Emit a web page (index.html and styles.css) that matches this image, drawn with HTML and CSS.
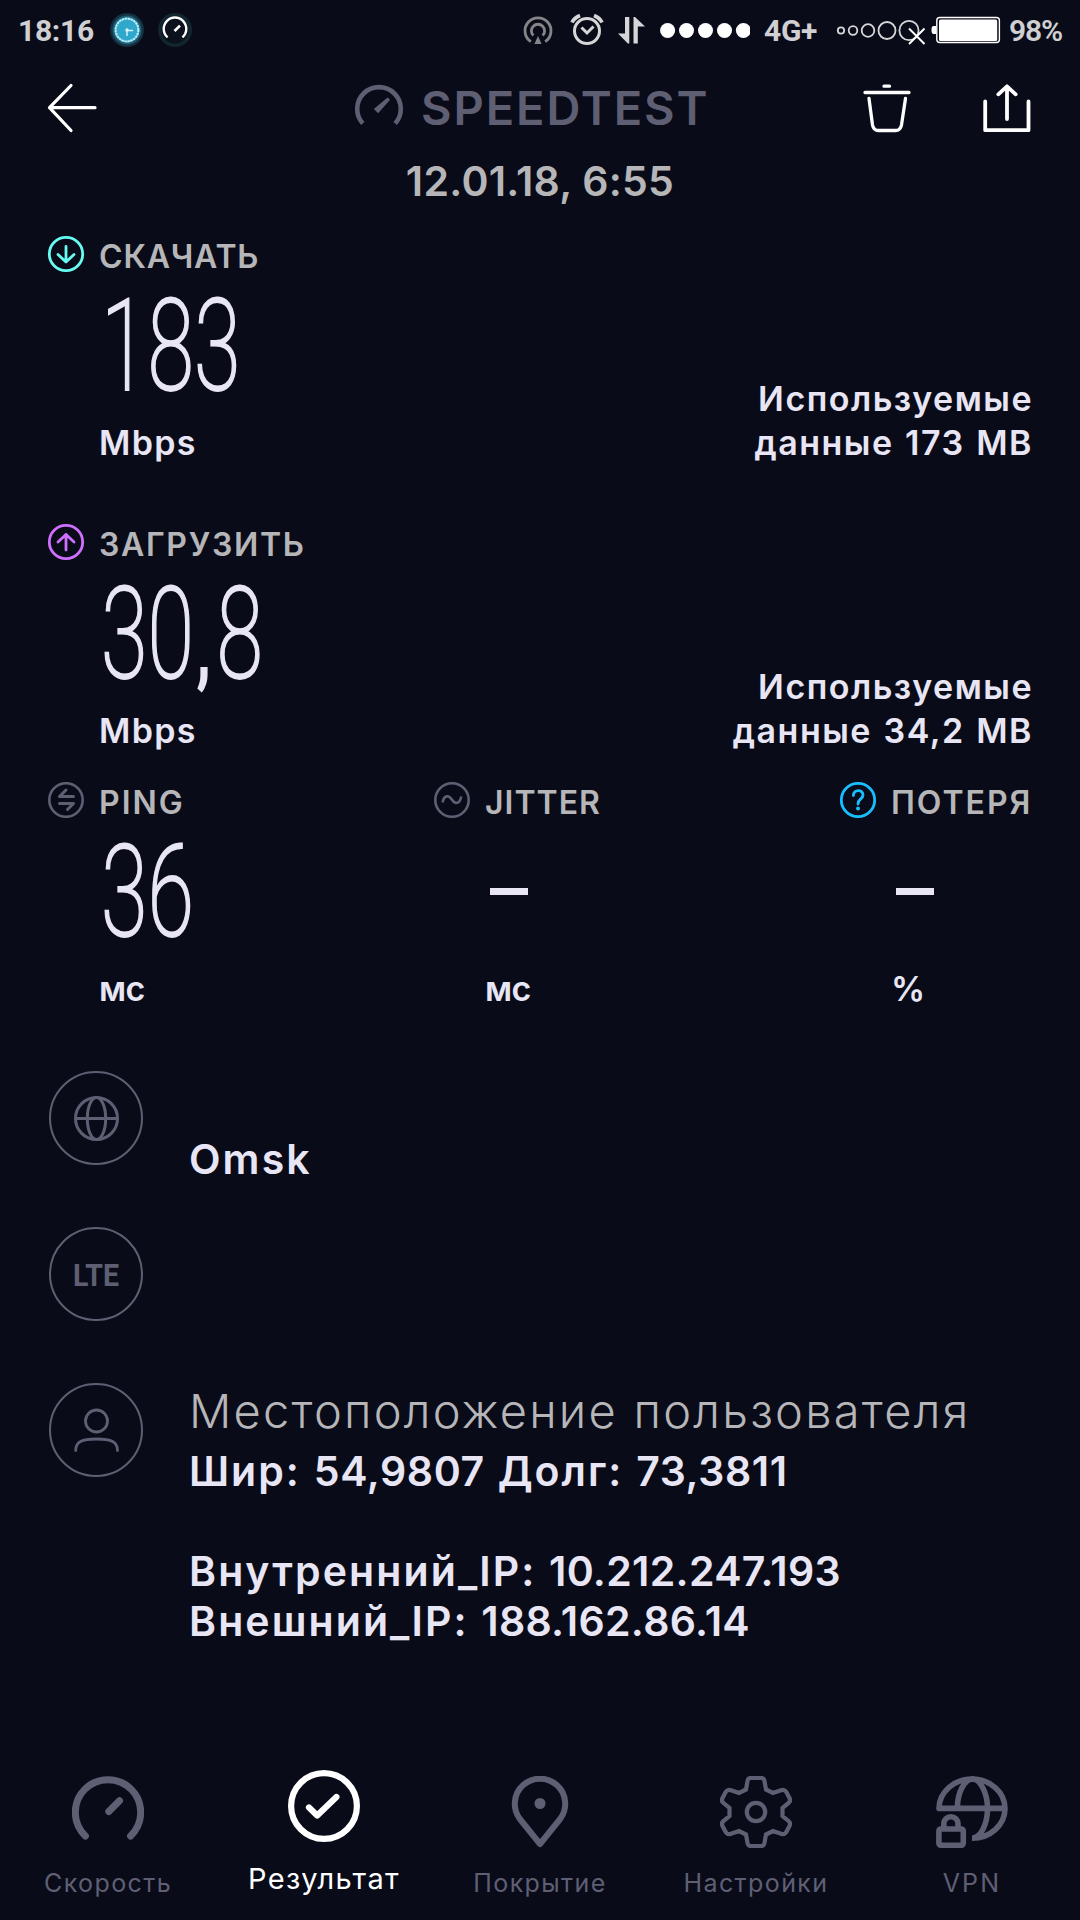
FILE: index.html
```html
<!DOCTYPE html>
<html lang="ru">
<head>
<meta charset="utf-8">
<title>Speedtest</title>
<link rel="stylesheet" href="styles.css">
</head>
<body>
<div class="status">
  <span class="clock">18:16</span>
  <svg class="notify" width="34" height="34" viewBox="0 0 34 34" fill="none"><circle cx="17" cy="17" r="17" fill="#15303f"/><circle cx="17" cy="17" r="14.5" fill="#1c6079"/><circle cx="17" cy="17" r="12.5" fill="#2fa8cc"/><circle cx="17" cy="17" r="11.4" stroke="#c9edf5" stroke-width="2" stroke-dasharray="2.4 .6"/><path d="M17 16.5V23M16 17.5H23" stroke="#d8f4fa" stroke-width="1.4"/><circle cx="17" cy="17" r="1.7" fill="#d8f4fa"/></svg>
  <svg class="notify" width="34" height="34" viewBox="0 0 34 34" fill="none"><circle cx="17" cy="17" r="17" fill="#12262f"/><circle cx="17" cy="17" r="13.5" fill="#0b111d"/><path d="M9.6 24.4A11.3 11.3 0 1 1 24.4 24.4" stroke="#fff" stroke-width="2.4"/><path d="M16.5 18 22 12.6" stroke="#fff" stroke-width="2.6"/></svg>
  <svg class="radio" width="230" height="34" viewBox="520 13 230 34" fill="none">
    <g stroke="#858588" stroke-width="2.8"><path d="M530.8 41.6A13 13 0 1 1 545.2 41.6"/><path d="M533.4 35.6A6.6 6.6 0 1 1 542.6 35.6"/></g><path d="M538 36l3.6 8h-7.2z" fill="#858588"/>
    <g stroke="#d6d6d8" stroke-width="3"><circle cx="587" cy="31" r="12.5"/><path d="M581.5 27.5l5.5 5.5 6.5-6.5"/><path d="M572 22.500Q574 18 580 15.500M602 22.500Q600 18 594 15.500" stroke-width="3.600"/></g>
    <path d="M625 17h4.300v26.500h-1.500L618 33.500h7zM637.800 43.500h-4.300V17h1.500L645 26.500h-7.200z" fill="#d6d6d8"/>
    <g fill="#fff"><circle cx="667.600" cy="30.500" r="7.500"/><circle cx="686.500" cy="30.500" r="7.500"/><circle cx="705.500" cy="30.500" r="7.500"/><circle cx="724.500" cy="30.500" r="7.500"/><circle cx="743.400" cy="30.500" r="7.500"/></g>
  </svg>
  <span class="network">4G+</span>
  <svg class="power" width="166" height="34" viewBox="835 13 166 34" fill="none">
    <g stroke="#d6d6d8" stroke-width="1.800"><circle cx="841" cy="30.500" r="3.200"/><circle cx="853" cy="30.500" r="4.300"/><circle cx="868" cy="30.500" r="6.300"/><circle cx="887" cy="30.500" r="8.500"/><circle cx="909" cy="30.500" r="9.600"/></g>
    <path d="M909 28.500 924.500 44M924.500 28.500 909 44" stroke="#fff" stroke-width="2"/>
    <path d="M936 26h-2.500q-2 0-2 4t2 4h2.500z" fill="#fff"/><rect x="936.800" y="17.500" width="62.600" height="25" rx="3" stroke="#fff" stroke-width="1.400"/><rect x="939" y="19.500" width="58.200" height="21.500" rx="1.500" fill="#fff"/>
  </svg>
  <span class="percent">98%</span>
</div>

<header class="top">
  <svg class="back" width="52" height="52" viewBox="0 0 52 52" fill="none" stroke="#fff" stroke-width="3.200" stroke-linecap="round" stroke-linejoin="round"><path d="M49 25.700H3.500M25 3.500 3.500 25.700 25 48.500"/></svg>
  <div class="brand">
    <svg width="50" height="50" viewBox="0 0 50 50" fill="none"><path d="M8.800 40.500A21.800 21.800 0 1 1 41.200 40.500" stroke="#5f5f74" stroke-width="4.600"/><path d="M33.600 14.500 36 16.800 24.200 30.300 19.800 26z" fill="#5f5f74"/></svg>
    <span class="brand-name">SPEEDTEST</span>
  </div>
  <svg class="trash" width="50" height="50" viewBox="0 0 50 50" fill="none" stroke="#fff" stroke-width="3.300" stroke-linecap="round"><path d="M22 3.200H27.500M3 9.500H47M7 15.500 10.500 42Q11.500 47.500 16.500 47.500H33.500Q38.500 47.500 39.500 42L43.500 15.500"/></svg>
  <svg class="share" width="50" height="50" viewBox="0 0 50 50" fill="none" stroke="#fff" stroke-width="3.800" stroke-linecap="round" stroke-linejoin="round"><path d="M3.200 18.500V47.200H46.500V18.500M25 36V3.500M16.300 11.300 25 3.300 33.700 11.300"/></svg>
</header>
<div class="date">12.01.18, 6:55</div>

<main>
  <section class="transfer">
    <div class="metric">
      <div class="metric-head"><svg class="badge" width="38" height="38" viewBox="0 0 38 38" fill="none" stroke="#67fcf2" stroke-width="2.800" stroke-linecap="round" stroke-linejoin="round"><circle cx="19" cy="19" r="16.700"/><path d="M19 11.500V27M11 19.500 19 27 27 19.500"/></svg><span class="label dl">СКАЧАТЬ</span></div>
      <div class="value"><span class="num">183</span></div>
      <div class="unit">Mbps</div>
    </div>
    <p class="used">Используемые<br>данные 173 MB</p>
  </section>
  <section class="transfer upload">
    <div class="metric">
      <div class="metric-head"><svg class="badge" width="38" height="38" viewBox="0 0 38 38" fill="none" stroke="#cf6ffd" stroke-width="2.800" stroke-linecap="round" stroke-linejoin="round"><circle cx="19" cy="19" r="16.700"/><path d="M19 27V11.500M11 19 19 11.500 27 19"/></svg><span class="label ul">ЗАГРУЗИТЬ</span></div>
      <div class="value"><span class="num">30<span class="comma">,</span>8</span></div>
      <div class="unit">Mbps</div>
    </div>
    <p class="used">Используемые<br>данные 34,2 MB</p>
  </section>
  <section class="quality">
    <div class="metric">
      <div class="metric-head"><svg class="badge" width="38" height="38" viewBox="0 0 38 38" fill="none" stroke="#5f5f74" stroke-width="3" stroke-linecap="round" stroke-linejoin="round"><circle cx="19" cy="19" r="16.700" stroke-width="2.600"/><path d="M26.500 15.500H12.500L19 9M12.500 22.500H26.500L20.500 28.500"/></svg><span class="label wide">PING</span></div>
      <div class="value"><span class="num">36</span></div>
      <div class="unit ms">мс</div>
    </div>
    <div class="metric">
      <div class="metric-head"><svg class="badge" width="38" height="38" viewBox="0 0 38 38" fill="none" stroke="#5f5f74" stroke-width="2.600" stroke-linecap="round"><circle cx="19" cy="19" r="16.700"/><path d="M9.800 20.500C11 14.500 15.500 13.500 18.800 18.500S26.500 23 28 16.500"/></svg><span class="label">JITTER</span></div>
      <div class="value"><span class="dash">–</span></div>
      <div class="unit ms">мс</div>
    </div>
    <div class="metric">
      <div class="metric-head"><svg class="badge" width="38" height="38" viewBox="0 0 38 38" fill="none" stroke="#18bfff" stroke-width="2.800" stroke-linecap="round"><circle cx="19" cy="19" r="16.700"/><path d="M14.400 14.500C14.400 8 24 8 24 14 24 18.300 19 17.500 19 23"/><circle cx="19" cy="27.500" r="2" fill="#18bfff" stroke="none"/></svg><span class="label wide">ПОТЕРЯ</span></div>
      <div class="value"><span class="dash">–</span></div>
      <div class="unit">%</div>
    </div>
  </section>

  <ul class="details">
    <li>
      <svg width="94" height="94" viewBox="0 0 94 94" fill="none" stroke="#5f5f74" stroke-width="3"><circle cx="47" cy="47" r="46" stroke-width="2"/><circle cx="47.500" cy="47.500" r="21"/><ellipse cx="47.500" cy="47.500" rx="9.200" ry="21"/><path d="M26.500 47.500H68.500"/></svg>
      <div class="city">Omsk</div>
    </li>
    <li>
      <svg width="94" height="94" viewBox="0 0 94 94"><circle cx="47" cy="47" r="46" fill="none" stroke="#5f5f74" stroke-width="2"/><text class="lte" x="24" y="58.500" textLength="46" lengthAdjust="spacingAndGlyphs">LTE</text></svg>
    </li>
    <li>
      <svg width="94" height="94" viewBox="0 0 94 94" fill="none" stroke="#5f5f74" stroke-width="2.800" stroke-linecap="round"><circle cx="47" cy="47" r="46" stroke-width="2"/><circle cx="47.500" cy="38" r="11"/><path d="M26.700 67.500C26.700 59 32.500 56 47.500 56S68.500 59 68.500 67.500"/></svg>
      <div class="place">
        <h2>Местоположение пользователя</h2>
        <p class="coords"><span class="key">Шир:</span> 54,9807 <span class="key">Долг:</span> 73,3811</p>
        <p class="ip"><span class="key">Внутренний_IP:</span> 10.212.247.193<br><span class="key">Внешний_IP:</span> 188.162.86.14</p>
      </div>
    </li>
  </ul>
</main>

<nav class="tabs">
  <a class="tab"><svg width="72" height="72" viewBox="0 0 72 72" fill="none" stroke="#5f5f74" stroke-width="7" stroke-linecap="round"><path d="M13.400 60A32.700 32.700 0 1 1 58.600 60M36.800 35.500 47.500 24.800"/></svg><span>Скорость</span></a>
  <a class="tab active"><svg width="72" height="72" viewBox="0 0 72 72" fill="none" stroke="#fff" stroke-width="6.200" stroke-linecap="round" stroke-linejoin="round"><circle cx="36" cy="36" r="32.900"/><path d="M21 37.500 29.200 45.500 48.400 27"/></svg><span>Результат</span></a>
  <a class="tab cover"><svg width="72" height="72" viewBox="0 0 72 72" fill="none" stroke="#5f5f74" stroke-width="6" stroke-linejoin="round"><path d="M36 68 15.500 42.500A25.200 25.200 0 1 1 56.500 42.500Z"/><circle cx="36" cy="27.500" r="5.500" fill="#5f5f74" stroke="none"/></svg><span>Покрытие</span></a>
  <a class="tab"><svg width="72" height="72" viewBox="0 0 72 72" fill="none" stroke="#5f5f74" stroke-width="4.200"><path d="M31 2H41Q44 2 44.500 5L46 13.500L53 17L61 14.200Q64 13 66 15.500L69.500 22Q71 25 68.500 27L62.500 32V40L68.500 45Q71 47 69.500 50L66 56.500Q64 59 61 57.800L53 55L46 58.500L44.500 67Q44 70 41 70H31Q28 70 27.500 67L26 58.500L19 55L11 57.800Q8 59 6 56.500L2.500 50Q1 47 3.500 45L9.500 40V32L3.500 27Q1 25 2.500 22L6 15.500Q8 13 11 14.200L19 17L26 13.500L27.500 5Q28 2 31 2Z"/><circle cx="36" cy="36" r="9.200"/></svg><span>Настройки</span></a>
  <a class="tab vpn"><svg width="72" height="72" viewBox="0 0 72 72" fill="none" stroke="#5f5f74" stroke-width="5.600" stroke-linecap="round"><path d="M3 32.300A33 29.600 0 1 1 36 62.200C45 62 51.500 48 51.500 32.300S44 2.900 36.500 2.900 21.400 16 21.400 32M3 32.400H69"/><rect x="2.900" y="53" width="24.400" height="16.300" rx="2"/><path d="M7.800 52V47.500a7.100 6.800 0 0 1 14.200 0V52"/></svg><span>VPN</span></a>
</nav>
</body>
</html>
```
FILE: styles.css
```css
* { box-sizing: border-box; margin: 0; padding: 0; }

body {
  display: flex;
  flex-direction: column;
  width: 1080px;
  height: 1920px;
  background: #0a0b19;
  color: #e8e6f5;
  font-family: Inter, "Open Sans", sans-serif;
  font-weight: 600;
  overflow: hidden;
}

svg { display: block; flex: none; }

/* status bar */
.status {
  display: flex;
  align-items: center;
  height: 60px;
  padding-left: 18px;
  color: #d0d0d2;
  font: 700 30px/60px Roboto, sans-serif;
  white-space: nowrap;
}
.clock { width: 92px; height: 60px; padding-top: 1px; letter-spacing: -.3px; }
.notify { margin-right: 14px; }
.radio { margin-left: 314px; }
.network { width: 71px; padding: 1px 0 0 14px; letter-spacing: -.3px; }
.power { margin-left: 14px; }
.percent { padding: 1px 0 0 8px; font-weight: 600; letter-spacing: -1.2px; }

/* header */
.top { display: flex; align-items: center; height: 95px; padding-left: 46px; }
.back { margin-right: 256px; }
.brand { display: flex; align-items: center; width: 360px; gap: 17px; }
.brand-name { color: #5f5f74; font-size: 47px; line-height: 95px; letter-spacing: 1.9px; }
.trash { margin-left: 148px; }
.share { margin-left: 70px; }
.date { height: 53px; line-height: 53px; text-align: center; color: #b6b6b8; font-size: 41px; letter-spacing: .25px; }

/* measurements */
.transfer { display: flex; justify-content: space-between; align-items: flex-end; margin: 24px 47px 46px 47px; height: 242px; }
.transfer.upload { margin-top: 0; margin-bottom: 16px; }
.metric-head { display: flex; height: 49px; }
.badge { margin: 3px 14px 0 0; }
.label { color: #b6b6b8; font-size: 32px; line-height: 49px; letter-spacing: 1px; }
.label.dl { letter-spacing: .8px; }
.label.ul { letter-spacing: 1.7px; }
.label.wide { letter-spacing: 2px; }
.value { height: 130px; padding-left: 54px; font: 200 128px/130px Roboto, sans-serif; white-space: nowrap; }
.num { display: inline-block; transform: scaleX(.66); transform-origin: 0 0; -webkit-text-stroke: 1.8px #e8e6f5; }
.comma { margin: 0 10px 0 5px; font-size: 86px; font-weight: 500; line-height: 1; }
.dash { display: inline-block; padding-left: 3px; font: 500 76px/1 Inter, sans-serif; vertical-align: 21px; }
.unit { height: 63px; padding-left: 52px; font-size: 34px; line-height: 63px; letter-spacing: 1.3px; }
.unit.ms { letter-spacing: -.7px; }
.used { padding-bottom: 9px; text-align: right; font-size: 34px; line-height: 44px; letter-spacing: 1.5px; word-spacing: 1.5px; }
.quality { display: grid; grid-template-columns: 386px 406px 1fr; margin-left: 47px; height: 242px; }

/* connection details */
.details { margin: 51px 0 0 49px; list-style: none; }
.details li { display: flex; height: 156px; gap: 46px; }
.lte { fill: #5f5f74; font: 700 32px Roboto, sans-serif; }
.city { padding-top: 63px; font-size: 41px; line-height: 50px; letter-spacing: 2.1px; }
.place { margin-top: -7px; font-size: 41px; line-height: 50px; white-space: nowrap; }
.place h2 { color: #b6b6b8; font-size: 47px; line-height: 70px; font-weight: 350; letter-spacing: 2.25px; }
.coords { letter-spacing: .6px; word-spacing: 2px; }
.coords .key { letter-spacing: 2px; }
.ip { margin-top: 50px; letter-spacing: .3px; word-spacing: 2px; }
.ip .key { letter-spacing: 2.1px; }

/* tab bar */
.tabs { display: grid; grid-template-columns: repeat(5, 1fr); height: 150px; margin-top: auto; }
.tab { display: flex; flex-direction: column; align-items: center; gap: 20px; padding-top: 6px; color: #5f5f74; font-size: 25px; line-height: 30px; font-weight: 400; letter-spacing: 1.4px; }
.tab.active { padding-top: 0; gap: 22px; color: #fff; font-size: 29px; letter-spacing: 1.35px; }
.tab.vpn { letter-spacing: 2.2px; }
```
